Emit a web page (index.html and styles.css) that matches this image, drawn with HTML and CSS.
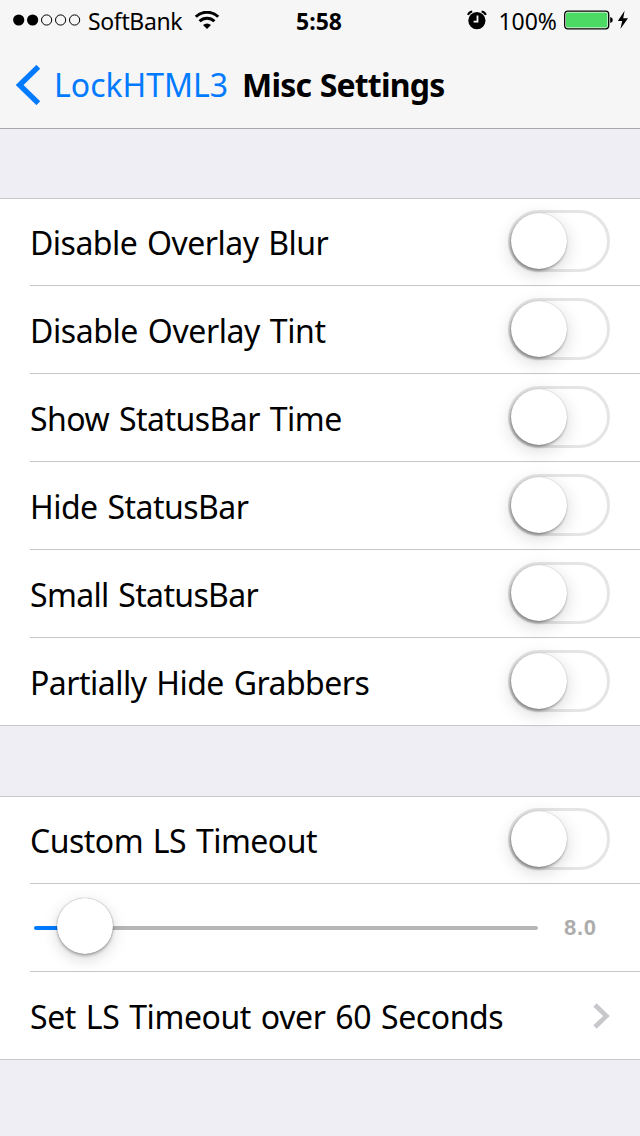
FILE: index.html
```html
<!DOCTYPE html>
<html lang="en">
<head>
    <meta charset="UTF-8">
    <meta name="viewport" content="width=device-width, initial-scale=1.0">
    <title>Misc Settings</title>
    <link rel="stylesheet" href="styles.css">
</head>
<body>
    <header>
        <div class="statusbar">
            <div class="status-left">
                <svg class="signal" width="68" height="12" viewBox="0 0 68 12">
                    <circle cx="5.7" cy="6" r="5.6"/>
                    <circle cx="19.6" cy="6" r="5.6"/>
                    <circle class="empty" cx="33.6" cy="6" r="5.1"/>
                    <circle class="empty" cx="47.6" cy="6" r="5.1"/>
                    <circle class="empty" cx="61.6" cy="6" r="5.1"/>
                </svg>
                <span class="carrier">SoftBank</span>
                <svg class="wifi" width="26" height="18" viewBox="0 0 26 18">
                    <path class="arc" d="M1.8 5.8a16 16 0 0 1 22.4 0M5.6 10.3a10.6 10.6 0 0 1 14.8 0"/>
                    <path d="M9 14a6 6 0 0 1 8 0L13 18z"/>
                </svg>
            </div>
            <div class="clock">5:58</div>
            <div class="status-right">
                <svg class="alarm" width="20" height="20" viewBox="0 0 20 20">
                    <circle cx="9.9" cy="10.6" r="8.6"/>
                    <path class="bell" d="M1 4.9Q2 2.1 5.2 1.5M18.8 4.9Q17.8 2.1 14.6 1.5"/>
                    <path class="hands" d="M10.5 5.4v6.2H6.6"/>
                </svg>
                <span class="percent">100%</span>
                <svg class="battery" width="50" height="20" viewBox="0 0 50 20">
                    <rect class="case" x=".7" y="1.2" width="44" height="17.6" rx="3"/>
                    <rect class="level" x="2" y="2.5" width="41.4" height="15" rx="1.5"/>
                    <path d="M46.2 7q2.6.4 2.6 3t-2.6 3z"/>
                </svg>
                <svg class="bolt" width="12" height="20" viewBox="0 0 12 20">
                    <path d="M7.6.8L.8 11h4.4L3.4 19 11 8.2H6.2z"/>
                </svg>
            </div>
        </div>
        <nav>
            <svg class="back" width="25" height="40" viewBox="0 0 25 40">
                <path d="M22.3 1.8L3.6 20L22.3 38.2"/>
            </svg>
            <a class="back-label">LockHTML3</a>
            <h1>Misc Settings</h1>
        </nav>
    </header>
    <main>
        <section class="group">
            <div class="row"><span class="label">Disable Overlay Blur</span><span class="toggle"></span></div>
            <div class="row"><span class="label loose">Disable Overlay Tint</span><span class="toggle"></span></div>
            <div class="row"><span class="label">Show StatusBar Time</span><span class="toggle"></span></div>
            <div class="row"><span class="label">Hide StatusBar</span><span class="toggle"></span></div>
            <div class="row"><span class="label tight">Small StatusBar</span><span class="toggle"></span></div>
            <div class="row"><span class="label">Partially Hide Grabbers</span><span class="toggle"></span></div>
        </section>
        <section class="group">
            <div class="row"><span class="label">Custom LS Timeout</span><span class="toggle"></span></div>
            <div class="row">
                <div class="slider">
                    <span class="fill"></span>
                    <span class="thumb"></span>
                    <span class="rest"></span>
                </div>
                <span class="value">8.0</span>
            </div>
            <div class="row">
                <span class="label loose">Set LS Timeout over 60 Seconds</span>
                <svg class="chevron" width="17" height="26" viewBox="0 0 17 26">
                    <path d="M2 2L13.4 13L2 24"/>
                </svg>
            </div>
        </section>
    </main>
</body>
</html>
```
FILE: styles.css
```css
* {
    margin: 0;
    padding: 0;
    box-sizing: border-box;
}
body {
    width: 640px;
    height: 1136px;
    overflow: hidden;
    background: #efeef4;
    font-family: "Noto Sans", sans-serif;
    color: #000;
}
svg {
    display: block;
    flex: none;
}
header {
    height: 129px;
    background: #f6f6f6;
    border-bottom: 1px solid #a7a7ab;
}
.statusbar {
    display: grid;
    grid-template-columns: 1fr auto 1fr;
    align-items: center;
    height: 40px;
    padding: 0 11px 0 13px;
    font-size: 23px;
    line-height: 38px;
}
.status-left, .status-right {
    display: flex;
    align-items: center;
}
.status-right {
    justify-content: flex-end;
}
.empty {
    fill: none;
    stroke: #000;
    stroke-width: 1;
}
.carrier {
    margin-left: 7px;
    width: 95px;
    padding-top: 2px;
    letter-spacing: -0.35px;
    white-space: nowrap;
}
.wifi {
    margin-left: 11px;
}
.arc {
    fill: none;
    stroke: #000;
    stroke-width: 3;
}
.clock {
    padding-top: 2px;
    margin-right: 4px;
    font-weight: bold;
}
.bell {
    fill: none;
    stroke: #000;
    stroke-width: 2;
}
.hands {
    fill: none;
    stroke: #f6f6f6;
    stroke-width: 1.8;
}
.percent {
    padding-top: 2px;
    margin-left: 11px;
    margin-right: 7px;
}
.case {
    fill: #fff;
    stroke: #000;
    stroke-width: 1.3;
}
.level {
    fill: #4cd964;
}
.bolt {
    margin-left: 3px;
}
nav {
    display: flex;
    align-items: center;
    height: 88px;
    padding-left: 16px;
    line-height: 88px;
    font-size: 32px;
    white-space: nowrap;
}
.back {
    margin-top: 1px;
    fill: none;
    stroke: #007aff;
    stroke-width: 5.4;
}
.back-label {
    margin-left: 13px;
    width: 174px;
    padding-top: 2px;
    color: #007aff;
}
h1 {
    margin-left: 14px;
    padding-top: 2px;
    font-size: 32px;
    letter-spacing: -0.8px;
    word-spacing: 1px;
}
main {
    padding-top: 69px;
}
.group {
    margin-bottom: 70px;
    padding-left: 30px;
    background: #fff;
    border-top: 1px solid #c8c7cc;
    border-bottom: 1px solid #c8c7cc;
}
.row {
    display: flex;
    align-items: center;
    justify-content: space-between;
    height: 88px;
    padding-right: 30px;
    border-bottom: 1px solid #c8c7cc;
}
.row:first-child, .row:last-child {
    height: 87px;
}
.row:last-child {
    border-bottom: none;
}
.label {
    padding-top: 2px;
    font-size: 32px;
    line-height: 84px;
    letter-spacing: -0.52px;
    word-spacing: 2px;
    white-space: nowrap;
}
.loose {
    letter-spacing: -0.42px;
}
.tight {
    letter-spacing: -0.66px;
}
.toggle {
    width: 102px;
    height: 62px;
    margin-bottom: 2px;
    border: 3px solid #e5e5e5;
    border-radius: 31px;
}
.toggle::before {
    content: "";
    display: block;
    width: 56px;
    height: 56px;
    border-radius: 50%;
    background: #fff;
    box-shadow: 0 0 1px rgba(0, 0, 0, 0.3), -1px 2px 3px rgba(0, 0, 0, 0.35), 0 5px 18px rgba(0, 0, 0, 0.16);
}
.slider {
    display: flex;
    align-items: center;
    width: 504px;
    margin-left: 4px;
}
.fill {
    width: 24px;
    height: 4px;
    border-radius: 2px 0 0 2px;
    background: #007aff;
}
.thumb {
    width: 56px;
    height: 56px;
    margin: 0 -1px 4px;
    border-radius: 50%;
    background: #fff;
    box-shadow: 0 0 1px rgba(0, 0, 0, 0.5), 0 2px 3px rgba(0, 0, 0, 0.25), 0 5px 16px rgba(0, 0, 0, 0.16);
    z-index: 1;
}
.rest {
    flex: 1;
    height: 4px;
    border-radius: 0 2px 2px 0;
    background: #b6b6b6;
}
.value {
    width: 46px;
    font-family: "Liberation Sans", Arial, sans-serif;
    font-size: 22px;
    font-weight: bold;
    letter-spacing: 0.7px;
    color: #acacac;
}
.chevron {
    margin-top: 1px;
    fill: none;
    stroke: #c7c7cc;
    stroke-width: 4.6;
}
```
